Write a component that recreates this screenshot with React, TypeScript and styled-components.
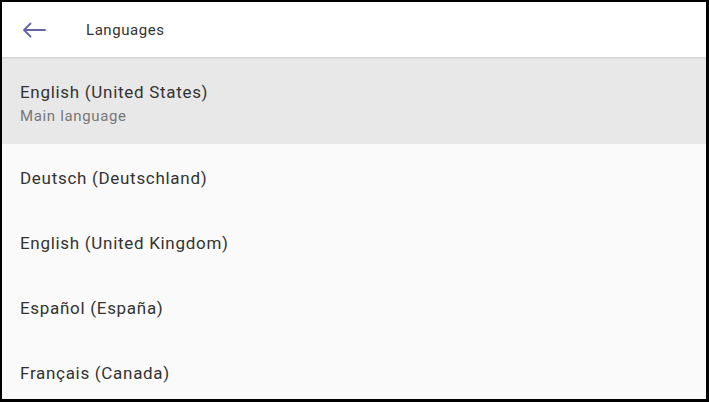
import React from "react";
import styled, { createGlobalStyle } from "styled-components";

const Global = createGlobalStyle`
  html, body { margin: 0; padding: 0; background: #000; }
  body { font-family: Roboto, "Noto Sans", Arial, sans-serif; }
`;

const Frame = styled.div`
  box-sizing: border-box;
  width: 709px;
  height: 402px;
  border-style: solid;
  border-color: #000;
  border-width: 2px 3px 3px 2px;
  background: #fafafa;
  overflow: hidden;
  display: flex;
  flex-direction: column;
`;

const Header = styled.header`
  height: 55px;
  flex: none;
  background: #ffffff;
  display: flex;
  align-items: center;
  box-shadow: 0 1px 2px rgba(0, 0, 0, 0.12);
  position: relative;
  z-index: 1;
`;

const BackButton = styled.button`
  width: 84px;
  height: 55px;
  padding: 0 0 0 20px;
  border: none;
  background: transparent;
  display: flex;
  align-items: center;
  color: #6264a7;
`;

const Title = styled.h1`
  margin: 0;
  font-size: 15px;
  letter-spacing: 0.55px;
  font-weight: 400;
  color: #333;
`;

const List = styled.ul`
  list-style: none;
  margin: 0;
  padding: 0;
  flex: 1;
  display: flex;
  flex-direction: column;
`;

const Row = styled.li<{ $selected?: boolean }>`
  box-sizing: border-box;
  height: ${(p) => (p.$selected ? "87px" : "65px")};
  flex: none;
  padding: ${(p) => (p.$selected ? "5px 18px 0" : "2px 18px 0")};
  background: ${(p) => (p.$selected ? "#e8e8e8" : "#fafafa")};
  display: flex;
  flex-direction: column;
  justify-content: center;
`;

const Name = styled.span`
  font-size: 17px;
  letter-spacing: 0.7px;
  color: #333;
  line-height: 22px;
`;

const Sub = styled.span`
  font-size: 15px;
  letter-spacing: 0.65px;
  color: #777;
  line-height: 20px;
  margin-top: 3px;
`;

const languages = [
  { name: "English (United States)", sub: "Main language", selected: true },
  { name: "Deutsch (Deutschland)" },
  { name: "English (United Kingdom)" },
  { name: "Español (España)" },
  { name: "Français (Canada)" },
];

export default function App() {
  return (
    <>
      <Global />
      <Frame>
        <Header>
          <BackButton aria-label="Back">
            <svg width="24" height="16" viewBox="0 0 24 16" fill="none">
              <path
                d="M23 8H2M8.5 1.5L2 8l6.5 6.5"
                stroke="currentColor"
                strokeWidth="1.8"
                strokeLinecap="round"
                strokeLinejoin="round"
              />
            </svg>
          </BackButton>
          <Title>Languages</Title>
        </Header>
        <List>
          {languages.map((l) => (
            <Row key={l.name} $selected={l.selected}>
              <Name>{l.name}</Name>
              {l.sub && <Sub>{l.sub}</Sub>}
            </Row>
          ))}
        </List>
      </Frame>
    </>
  );
}
